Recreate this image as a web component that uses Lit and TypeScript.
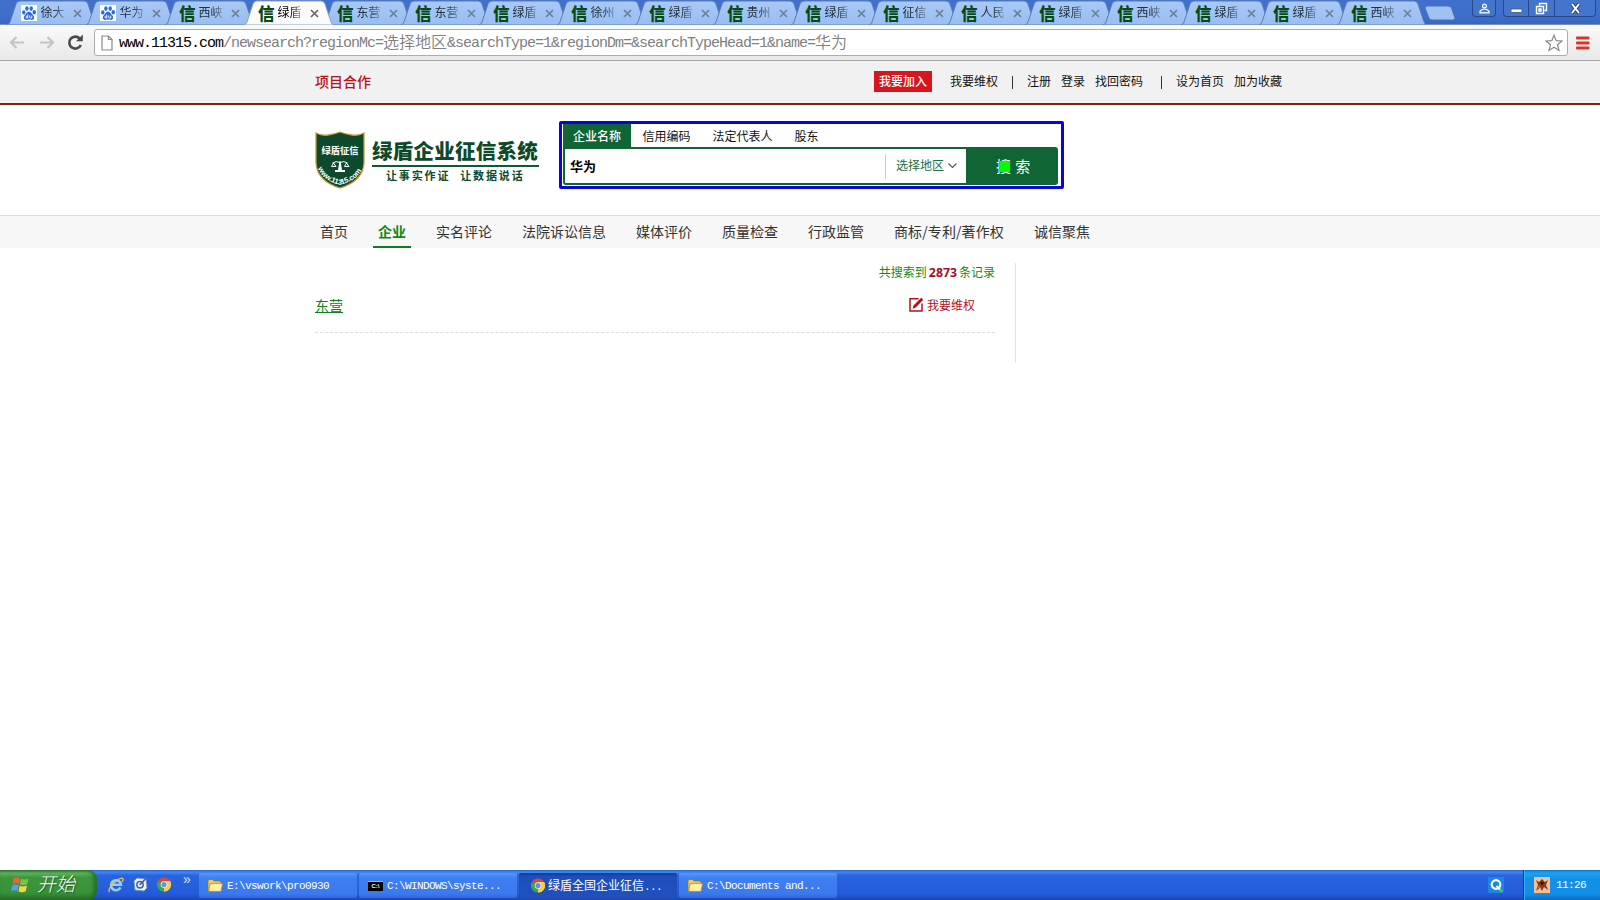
import { LitElement, html, css, svg } from "lit";
import { customElement } from "lit/decorators.js";
import { classMap } from "lit/directives/class-map.js";

const TABS: [string, string][] = [
  ["b", "徐大"], ["b", "华为"], ["x", "西峡"], ["x", "绿盾"], ["x", "东营"], ["x", "东营"],
  ["x", "绿盾"], ["x", "徐州"], ["x", "绿盾"], ["x", "贵州"], ["x", "绿盾"], ["x", "征信"],
  ["x", "人民"], ["x", "绿盾"], ["x", "西峡"], ["x", "绿盾"], ["x", "绿盾"], ["x", "西峡"],
];
const ACTIVE_TAB = 3;

const paw = html`<svg width="16" height="16" viewBox="0 0 16 16">
  <rect width="16" height="16" fill="#fff"/>
  <g fill="#2a6be0">
    <ellipse cx="2.8" cy="7.4" rx="1.7" ry="2.2"/><ellipse cx="5.9" cy="3.6" rx="1.7" ry="2.3"/>
    <ellipse cx="10.2" cy="3.6" rx="1.7" ry="2.3"/><ellipse cx="13.3" cy="7.2" rx="1.7" ry="2.2"/>
    <path d="M8 6.600C10 6.600 10.600 9 12.200 10.300C14 12 13.200 15 10.900 15C9.600 15 9 14.600 8 14.600S6.400 15 5.100 15C2.800 15 2 12 3.800 10.300C5.400 9 6 6.600 8 6.600Z"/>
  </g>
  <path d="M6.800 9.600V13H5.700Q4.900 13 4.900 12Q4.900 11 6.800 11M8.700 10.600V12.300Q8.700 13 9.500 13H10.800V10.600" fill="none" stroke="#fff" stroke-width=".9"/>
</svg>`;

const chrome = html`<svg width="14" height="15" viewBox="0 0 16 16">
  <path d="M8 8L1.070 4A8 8 0 0 1 14.930 4Z" fill="#e04634"/>
  <path d="M8 8L14.930 4A8 8 0 0 1 8 16Z" fill="#fbcf3a"/>
  <path d="M8 8L8 16A8 8 0 0 1 1.070 4Z" fill="#3fa650"/>
  <path d="M8 4H14.930A8 8 0 0 1 8 16L11.460 10Z" fill="#fbcf3a"/>
  <circle cx="8" cy="8" r="3.700" fill="#fff"/><circle cx="8" cy="8" r="3" fill="#5b95e6"/>
</svg>`;

const folder = html`<svg width="16" height="15" viewBox="0 0 16 15">
  <path d="M1 3Q1 1.500 2.500 1.500H5.500L7 3H12.500Q14 3 14 4.500V13H2Q1 13 1 12Z" fill="#f3cc58" stroke="#9c6d12" stroke-width=".7"/>
  <path d="M1.600 13.400L3.200 5.400H15.600L14 13.400Z" fill="#fff0a4" stroke="#b07d18" stroke-width=".7"/>
</svg>`;

@customElement("browser-tab")
class BrowserTab extends LitElement {
  static properties = { kind: {}, label: {}, active: { type: Boolean } };
  declare kind: string;
  declare label: string;
  declare active: boolean;
  static styles = css`
    :host { display: block; flex: none; width: 89px; height: 25px; margin-right: -11px; position: relative; }
    .shape { position: absolute; inset: 0; }
    .row { position: relative; display: flex; align-items: center; height: 25px; padding-left: 14px; }
    .icon { width: 16px; height: 25px; padding-top: 5px; box-sizing: border-box; }
    .icon svg { display: block; }
    .xin { font: 900 16.5px/16px "Noto Sans CJK SC", sans-serif; color: #064a14; width: 17px; }
    .label { margin-left: 3.500px; width: 24px; overflow: hidden; font: 12px/24px "Noto Sans CJK SC", sans-serif; color: #22303f;
      white-space: nowrap; -webkit-mask-image: linear-gradient(90deg, #000 50%, rgba(0,0,0,.3) 100%); height: 25px; }
    .label.active { color: #000; }
    .close { margin: 2px 0 0 8.500px; }
  `;
  render() {
    return html`
      <svg class="shape" width="90" height="25" viewBox="0 0 90 25">
        <defs><linearGradient id="g" x2="0" y2="1"><stop offset="0" stop-color="#a9c9f6"/><stop offset="1" stop-color="#98bdf1"/></linearGradient></defs>
        <path d="M0 25Q2 24.500 3 22L9 4Q10 1 13 1H77Q80 1 81 4L87 22Q88 24.500 89.500 25Z"
          fill=${this.active ? "#fbfbfb" : "url(#g)"} stroke=${this.active ? "#8ba3c8" : "#5a7db8"} stroke-width="1"/>
      </svg>
      <div class="row">
        <div class="icon">${this.kind === "b" ? paw : html`<div class="xin">信</div>`}</div>
        <div class=${classMap({ label: true, active: this.active })}>${this.label}</div>
        <svg class="close" width="9" height="9" viewBox="0 0 9 9"><path d="M1 1L8 8M8 1L1 8" stroke=${this.active ? "#666" : "#6c7f9b"} stroke-width="1.700"/></svg>
      </div>`;
  }
}

@customElement("app-root")
class AppRoot extends LitElement {
  static styles = css`
    :host { display: flex; flex-direction: column; width: 1600px; height: 900px; overflow: hidden; background: #fff;
      font-family: "Noto Sans CJK SC", sans-serif; font-size: 12px; color: #111; }
    * { box-sizing: border-box; }
    svg { display: block; flex: none; }
    .strip { display: flex; height: 25px; flex: none; padding-left: 7px; background: linear-gradient(#4070cc, #3f6fcb 60%, #3a67be);
      border-bottom: 1px solid #7791bd; }
    .on { z-index: 2; }
    .wide { width: 90px; }
    .newtab { margin: 5px 0 0 9px; }
    .wins { display: flex; margin-left: auto; padding-right: 4px; }
    .win { height: 17px; border: 1px solid #27488e; border-top: 0; border-right-width: 0; display: flex; align-items: center; justify-content: center;
      background: #4475cd; width: 26px; }
    .win.user { width: 24px; border-right-width: 1px; border-radius: 0 0 4px 4px; margin-right: 7px; }
    .win.first { border-radius: 0 0 0 4px; width: 25px; }
    .win.last { width: 42px; border-right-width: 1px; border-radius: 0 0 4px 0; }
    .toolbar { display: flex; align-items: center; height: 36px; flex: none; border-bottom: 1px solid #a5a5a5;
      background: linear-gradient(#fafafa, #e9e9e9); padding: 0 9px; }
    .nav-ic { margin-right: 12px; }
    .omni { display: flex; align-items: center; width: 1474px; height: 27px; margin: 0 8px 0 10px; padding: 0 4px 0 6px; background: #fff;
      border: 1px solid #b3aca4; border-radius: 3px; }
    .url { display: flex; align-items: center; margin-left: 6px; flex: 1; height: 25px; white-space: pre; color: #808080;
      font: 15px/26px "Liberation Mono", monospace; letter-spacing: -1.002px; }
    .url span { padding-top: 2px; }
    .url .host { color: #000; }
    .url .han { font: 16px/24px "Noto Sans CJK SC", sans-serif; font-weight: 350; letter-spacing: 0; padding: 0 0 3px; }
    .topbar { height: 44px; flex: none; background: #f1f1f1; border-bottom: 2px solid #8b1a12; }
    .wrap { width: 968px; margin-left: 315px; display: flex; align-items: center; }
    .topbar .wrap { width: 967px; height: 40px; line-height: 18px; }
    .coop { font-size: 14px; font-weight: 500; color: #b5121b; margin-right: auto; }
    .join { height: 21px; width: 58px; text-align: center; line-height: 20px; background: #d8141c; color: #fff; font-weight: 500; }
    .l1 { margin-left: 18px; } .bar { width: 1px; height: 13px; background: #333; margin-top: 2px; }
    .bar.a { margin-left: 14px; margin-right: 14px; }
    .bar.b { margin-left: 18px; margin-right: 14px; }
    .g10 { margin-left: 10px; }
    .head { height: 110px; flex: none; align-items: flex-start; }
    .shield { margin-top: 26px; }
    .brand { margin: 32px 0 0 7px; width: 167px; color: #0d4a2c; }
    .name { font-size: 20.500px; font-weight: 800; line-height: 27px; letter-spacing: .25px; white-space: nowrap; height: 28px; }
    .slogan { border-top: 2px solid #0d5a35; font-size: 11px; font-weight: 600; line-height: 16px; letter-spacing: 1.850px; padding: 0 0 0 14px;
      display: flex; gap: 10px; white-space: nowrap; }
    .search { margin: 16px 0 0 20px; width: 505px; height: 68px; border: 3px solid #0505dc; border-radius: 2px; padding: 0 0 0 1px; }
    .kinds { display: flex; height: 23px; line-height: 24px; }
    .kinds div { padding: 0 11px 0 11px; }
    .kinds .sel { background: #0f6533; color: #fff; width: 68px; padding: 0 10px; font-weight: 500; margin-right: 0.500px; }
    .box { display: flex; width: 495px; height: 38px; border: 2px solid #0f6533; border-radius: 0 3px 3px 3px; background: #0f6533; }
    .q { width: 320px; background: #fff; font-size: 13px; font-weight: 700; line-height: 34px; padding-left: 5px; color: #000; }
    .area { display: flex; align-items: center; width: 81px; background: #fff; color: #1f6b45; }
    .area i { width: 1px; height: 25px; background: #ccc; }
    .area span { margin: 0 4px 0 10px; line-height: 18px; padding-bottom: 2px; }
    .go { position: relative; flex: 1; color: #fff; font-size: 15px; line-height: 33px; padding-left: 30px; white-space: pre; word-spacing: 1px; }
    .go b { position: absolute; left: 33px; top: 12px; width: 11px; height: 11px; background: #00ff00; }
    .menu { height: 33px; flex: none; background: #f7f7f7; border-top: 1px solid #ddd; }
    .menu .wrap { width: 1000px; gap: 20px; height: 32px; }
    .menu .wrap div { font-size: 14px; line-height: 31px; height: 32px; padding: 0 5px; color: #333; white-space: nowrap; }
    .menu .wrap div:nth-child(8) { letter-spacing: .1px; }
    .menu .wrap .cur { color: #0a8a14; font-weight: 700; border-bottom: 2px solid #0a7d1c; }
    .main { flex: 1; margin-left: 315px; display: flex; align-items: flex-start; padding-top: 15px; }
    .list { width: 701px; height: 100px; border-right: 1px solid #e2e2e2; padding-right: 20px; }
    .count { display: flex; justify-content: flex-end; color: #12881a; height: 20px; line-height: 18px; }
    .count b { font: 700 12.300px/19px "Open Sans", sans-serif; color: #a80d1d; margin: 0 2px; }
    .item { display: flex; justify-content: space-between; align-items: center; height: 50px; padding: 0 20px 6px 0; border-bottom: 1px dashed #dcdcdc; }
    .item a { font-size: 14px; color: #128019; line-height: 20px; text-decoration: underline; text-underline-offset: 1px; }
    .right { display: flex; align-items: center; gap: 3px; color: #b3121c; line-height: 18px; }
    .task { display: flex; height: 30px; flex: none; align-items: stretch;
      background: linear-gradient(#2a66cf 0, #3d86f0 8%, #2a63de 18%, #245bdb 80%, #1c46ad 100%); }
    .start { width: 97px; display: flex; align-items: center; padding-left: 11px; border-radius: 0 9px 9px 0;
      background: linear-gradient(#2f7a30, #63b263 10%, #3c973c 25%, #379337 75%, #256f28); box-shadow: inset -3px 0 4px #256b28; }
    .start span { font-size: 19px; font-style: italic; color: #fff; line-height: 26px; margin-left: 7px; padding-bottom: 4px; font-weight: 300; text-shadow: 1px 1px 1px #234f22; }
    .quick { width: 102px; display: flex; padding: 7px 0 0 11px; gap: 9px; }
    .more { color: #dce9ff; font: 14px/10px "Liberation Sans", sans-serif; margin: -3px 0 0 3px; }
    .tb { width: 158px; margin: 3px 2px 2px 0; border-radius: 2px; background: linear-gradient(#5a97fa, #3f7ff2 20%, #3a79ee 85%, #2f67d8);
      display: flex; align-items: center; padding-left: 8px; color: #fff; font: 11px/16px "Liberation Mono", "Noto Sans CJK SC", monospace; letter-spacing: -.602px; white-space: pre; }
    .tb span { margin-left: 4px; }
    .tb.down { background: linear-gradient(#163c93, #1e4eb8 15%, #1f51bd); padding-left: 12px; }
    .tb.down span { margin-left: 3px; }
    .tb.down .zh { font: 12px/17px "Noto Sans CJK SC", sans-serif; letter-spacing: 0; margin: 0; }
    .cmd { width: 15px; height: 10px; background: #000; border-top: 1px solid #9db9ea; color: #fff; font: 700 6px/9px "Liberation Sans", sans-serif; letter-spacing: 0; text-align: center; margin-left: 1px; }
    .qq { margin: 7px 19px 0 auto; }
    .tray { width: 77px; display: flex; align-items: center; padding-left: 10px; border-left: 1px solid #0b3a92; gap: 6px; color: #fff;
      font: 11px/18px "Liberation Mono", monospace; letter-spacing: -.6px; background: linear-gradient(#1076c8, #1ba2f2 10%, #1290e8 30%, #128ee6 80%, #0f6bbd); box-shadow: inset 1px 0 #2fb4f5; }
  `;

  render() {
    const menu = ["首页", "企业", "实名评论", "法院诉讼信息", "媒体评价", "质量检查", "行政监管", "商标/专利/著作权", "诚信聚焦"];
    const arrow = svg`<path d="M2 7.500H15M7.500 2L2 7.500L7.500 13" fill="none" stroke="#c4c4c4" stroke-width="2.200"/>`;
    return html`
      <div class="strip">
        ${TABS.map(([k, t], i) => html`<browser-tab class=${classMap({ on: i === ACTIVE_TAB, wide: i < 4 })} .kind=${k} .label=${t} .active=${i === ACTIVE_TAB}></browser-tab>`)}
        <svg class="newtab" width="32" height="16" viewBox="0 0 32 16"><path d="M3 1H24Q26.500 1 27.500 3L31 13Q31 15 29 15H8Q6 15 5 13L1 3Q1 1 3 1Z" fill="#9fc2f3" stroke="#4a72b8"/></svg>
        <div class="wins">
          <div class="win user"><svg width="11" height="11" viewBox="0 0 11 11"><circle cx="5.500" cy="3" r="1.900" fill="#5b80c6" stroke="#fff" stroke-width="1.200"/><path d="M1 9.800V8.200Q3 6 5.500 6T10 8.200V9.800Z" fill="#5b80c6" stroke="#fff" stroke-width="1.200"/></svg></div>
          <div class="win first"><svg width="13" height="12" viewBox="0 0 13 12"><rect x="1" y="7" width="11" height="3.500" fill="#fff" stroke="#41547c" stroke-width=".8"/></svg></div>
          <div class="win"><svg width="13" height="13" viewBox="0 0 13 13"><path d="M4.500 3.500V1.500H11.500V8.500H9.500M1.500 4.500H8.500V11.500H1.500ZM4 7H6V9H4Z" fill="none" stroke="#fff" stroke-width="1.400"/></svg></div>
          <div class="win last"><svg width="11" height="11" viewBox="0 0 11 11"><path d="M2 1L9 10M9 1L2 10" stroke="#26375f" stroke-width="3.600"/><path d="M2 1L9 10M9 1L2 10" stroke="#fff" stroke-width="2"/></svg></div>
        </div>
      </div>
      <div class="toolbar">
        <svg class="nav-ic" width="17" height="15" viewBox="0 0 17 15">${arrow}</svg>
        <svg class="nav-ic" width="17" height="15" viewBox="0 0 17 15"><g transform="matrix(-1 0 0 1 17 0)">${arrow}</g></svg>
        <svg width="17" height="17" viewBox="0 0 17 17"><path d="M13.800 11A6 6 0 1 1 12.800 4.600" fill="none" stroke="#4a4a4a" stroke-width="2.600"/><path d="M9 7.200H15.800V.6Z" fill="#4a4a4a"/></svg>
        <div class="omni">
          <svg width="12" height="16" viewBox="0 0 12 16"><path d="M1 1H7.500L11 4.500V15H1ZM7.500 1V4.500H11" fill="#fdfdfd" stroke="#8a8a8a" stroke-width="1.200"/></svg>
          <div class="url"><span class="host">www.11315.com</span><span>/newsearch?regionMc=</span><span class="han">选择地区</span><span>&amp;searchType=1&amp;regionDm=&amp;searchTypeHead=1&amp;name=</span><span class="han">华为</span></div>
          <svg width="18" height="18" viewBox="0 0 18 18"><path d="M9 1.200L11.200 6.700L17 7L12.500 10.700L14 16.500L9 13.300L4 16.500L5.500 10.700L1 7L6.800 6.700Z" fill="#fff" stroke="#8a8a8a" stroke-width="1.200"/></svg>
        </div>
        <svg width="14" height="14" viewBox="0 0 14 14"><g fill="#d3362b"><rect y=".5" width="13.500" height="3" rx="1"/><rect y="5.500" width="13.500" height="3" rx="1"/><rect y="10.500" width="13.500" height="3" rx="1"/></g></svg>
      </div>
      <div class="topbar"><div class="wrap">
        <div class="coop">项目合作</div><div class="join">我要加入</div>
        <div class="l1">我要维权</div><div class="bar a"></div>
        <div>注册</div><div class="g10">登录</div><div class="g10">找回密码</div>
        <div class="bar b"></div><div>设为首页</div><div class="g10">加为收藏</div>
      </div></div>
      <div class="wrap head">
        <svg class="shield" width="50" height="58" viewBox="0 0 50 58">
          <path d="M1 2Q7 5 13 4Q20 3 25 1Q30 3 37 4Q43 5 49 2V32Q48 50 25 57Q2 50 1 32Z" fill="#0d4a2b" stroke="#c79a3b" stroke-width="1.300"/>
          <text x="25" y="22.500" text-anchor="middle" font-size="9.300" font-weight="700" fill="#fff" font-family="Noto Sans CJK SC">绿盾征信</text>
          <g fill="none" stroke="#fff" stroke-width="1"><path d="M17.500 32Q21 29.500 25 31.500Q29 29.500 32.500 32M25 30V39M18.500 32L16.500 35.500H21ZM31.500 32L29.500 35.500H34Z"/></g>
          <path d="M24.300 31H25.700L27 39H30V41H20V39H23Z" fill="#fff"/>
          <path id="arc" d="M2.800 37.500Q9 50.500 25 53.800Q42 50 48 37" fill="none"/>
          <text font-size="7.500" font-weight="700" fill="#fff" font-family="Liberation Sans"><textPath href="#arc" startOffset="0" textLength="55">www.11315.com</textPath></text>
        </svg>
        <div class="brand"><div class="name">绿盾企业征信系统</div><div class="slogan"><span>让事实作证</span><span>让数据说话</span></div></div>
        <div class="search">
          <div class="kinds"><div class="sel">企业名称</div><div>信用编码</div><div>法定代表人</div><div>股东</div></div>
          <div class="box"><div class="q">华为</div>
            <div class="area"><i></i><span>选择地区</span><svg width="9" height="6" viewBox="0 0 9 6"><path d="M.5 .5L4.500 4.500L8.500 .5" fill="none" stroke="#555" stroke-width="1.200"/></svg></div>
            <div class="go">搜 索<b></b></div></div>
        </div>
      </div>
      <div class="menu"><div class="wrap">${menu.map((m, i) => html`<div class=${classMap({ cur: i === 1 })}>${m}</div>`)}</div></div>
      <div class="main"><div class="list">
        <div class="count">共搜索到<b>2873</b>条记录</div>
        <div class="item"><a>东营</a><div class="right">
          <svg width="15" height="15" viewBox="0 0 15 15"><path d="M9.500 1.700H1V14H13V6.500" fill="none" stroke="#b3121c" stroke-width="1.500"/><path d="M3.500 11.700L4.500 8.500L12.200 .8L14.300 2.800L6.700 10.500Z" fill="#b3121c"/></svg>我要维权</div></div>
      </div></div>
      <div class="task">
        <div class="start">
          <svg width="19" height="18" viewBox="0 0 19 18"><path d="M2.500 2.500Q5.500 .5 9 2.200L7.800 8Q4.800 6.500 1.500 8.300Z" fill="#f0603a"/><path d="M10 2.700Q13.500 4.300 17.500 2.500L16.200 8.300Q12.500 10 8.900 8.500Z" fill="#7cc24a"/><path d="M1.200 9.400Q4.500 7.800 7.600 9.200L6.400 15Q3.500 13.500 .2 15Z" fill="#5c9df0"/><path d="M8.600 9.700Q12 11.300 16 9.500L14.700 15.300Q11 17 7.500 15.500Z" fill="#fbd34b"/></svg>
          <span>开始</span>
        </div>
        <div class="quick">
          <svg width="16" height="16" viewBox="0 0 16 16"><path d="M12.500 10.500A5 5 0 1 1 13 7.800H4" fill="none" stroke="#8dd0fb" stroke-width="2.600"/><path d="M1.500 15Q-.5 13 5 7T14.500 1.200Q16 2 14 5" fill="none" stroke="#f2c14b" stroke-width="1.300"/></svg>
          <svg width="15" height="15" viewBox="0 0 15 15"><path d="M1 4L4 1L13 2L14 11L11 14L2 13Z" fill="#eef3fa" stroke="#7390ba"/><circle cx="7" cy="7.800" r="3.200" fill="none" stroke="#3d6aa8" stroke-width="1.500"/><path d="M6.500 8L12.500 2" stroke="#44546d" stroke-width="1.400"/></svg>
          ${chrome}<span class="more">»</span>
        </div>
        <div class="tb">${folder}<span>E:\\vswork\\pro0930</span></div>
        <div class="tb"><div class="cmd">C:\\</div><span>C:\\WINDOWS\\syste...</span></div>
        <div class="tb down">${chrome}<span><span class="zh">绿盾全国企业征信</span>...</span></div>
        <div class="tb">${folder}<span>C:\\Documents and...</span></div>
        <svg class="qq" width="16" height="16" viewBox="0 0 16 16"><rect width="16" height="16" rx="1" fill="#1c86e4"/><circle cx="8" cy="7.500" r="4.300" fill="none" stroke="#fff" stroke-width="2.200"/><path d="M8.500 9L12 12.500" stroke="#fff" stroke-width="2"/><circle cx="13" cy="13.500" r="1.600" fill="#45d04b"/></svg>
        <div class="tray"><svg width="16" height="16" viewBox="0 0 16 16"><rect width="16" height="16" fill="#efc294"/><path d="M2 3L5 5L8 2L11 5L14 3L12 8L14 13L10 10L8 14L6 10L2 14L4 8Z" fill="#8e3522"/><path d="M6 5H10L9 8H7Z" fill="#2a1a14"/><path d="M3 10L6 8L5 13Z" fill="#d8552b"/></svg><span>11:26</span></div>
      </div>`;
  }
}
